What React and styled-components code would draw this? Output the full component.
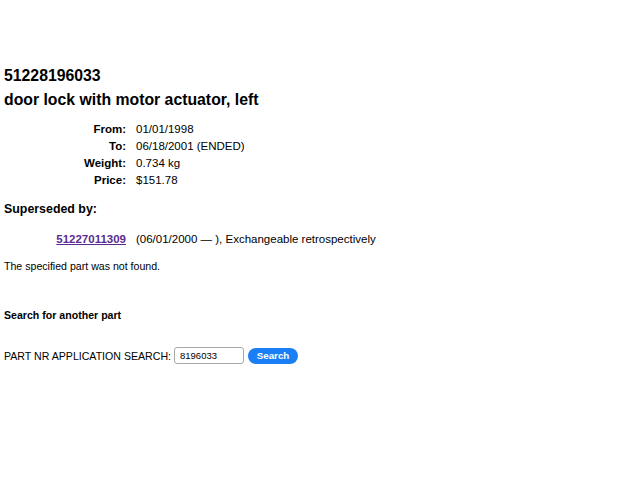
import React from "react";
import styled, { createGlobalStyle } from "styled-components";

const Global = createGlobalStyle`
  html, body { margin: 0; padding: 0; background: #fff; }
  body { font-family: "Liberation Sans", Arial, sans-serif; color: #000; }
`;

const Page = styled.div`
  padding: 64px 4px 0 4px;
`;

const Title = styled.h1`
  margin: 0;
  font-size: 15.8px;
  line-height: 24px;
  font-weight: bold;
`;

const Specs = styled.div`
  display: grid;
  grid-template-columns: 122px auto;
  column-gap: 10px;
  margin-top: 9px;
  font-size: 11.5px;
  line-height: 17px;
  width: max-content;
`;

const Label = styled.div`
  font-weight: bold;
  text-align: right;
`;

const Value = styled.div``;

const Section = styled.h2`
  margin: 12px 0 0 0;
  font-size: 12.4px;
  line-height: 17px;
  font-weight: bold;
`;

const SupRow = styled.div`
  display: grid;
  grid-template-columns: 122px auto;
  column-gap: 10px;
  margin-top: 13px;
  font-size: 11.5px;
  line-height: 17px;
`;

const PartLink = styled.a`
  justify-self: end;
  font-weight: bold;
  color: #5a2b8f;
  text-decoration: underline;
`;

const Note = styled.p`
  margin: 11px 0 0 0;
  font-size: 10.6px;
  line-height: 14px;
`;

const SearchHead = styled.h3`
  margin: 35px 0 0 0;
  font-size: 10.6px;
  line-height: 14px;
  font-weight: bold;
`;

const Form = styled.form`
  display: flex;
  align-items: center;
  margin-top: 25px;
  font-size: 10.6px;
  height: 17px;
`;

const FieldLabel = styled.label`
  margin-right: 3px;
`;

const Input = styled.input`
  box-sizing: border-box;
  width: 70px;
  height: 17px;
  padding: 0 5px;
  border: 1px solid #a8a8a8;
  border-radius: 3px;
  font-family: "Liberation Sans", Arial, sans-serif;
  font-size: 9.5px;
  color: #000;
  outline: none;
`;

const Button = styled.button`
  margin-left: 4px;
  height: 16px;
  width: 50px;
  border: none;
  border-radius: 8px;
  background: #1a7ff5;
  color: #fff;
  font-family: "Liberation Sans", Arial, sans-serif;
  font-weight: bold;
  font-size: 9.8px;
  padding: 0;
`;

export default function App() {
  return (
    <>
      <Global />
      <Page>
        <Title>51228196033</Title>
        <Title>door lock with motor actuator, left</Title>
        <Specs>
          <Label>From:</Label>
          <Value>01/01/1998</Value>
          <Label>To:</Label>
          <Value>06/18/2001 (ENDED)</Value>
          <Label>Weight:</Label>
          <Value>0.734 kg</Value>
          <Label>Price:</Label>
          <Value>$151.78</Value>
        </Specs>
        <Section>Superseded by:</Section>
        <SupRow>
          <PartLink href="#">51227011309</PartLink>
          <span>(06/01/2000 — ), Exchangeable retrospectively</span>
        </SupRow>
        <Note>The specified part was not found.</Note>
        <SearchHead>Search for another part</SearchHead>
        <Form onSubmit={(e) => e.preventDefault()}>
          <FieldLabel>PART NR APPLICATION SEARCH:</FieldLabel>
          <Input defaultValue="8196033" />
          <Button type="submit">Search</Button>
        </Form>
      </Page>
    </>
  );
}
